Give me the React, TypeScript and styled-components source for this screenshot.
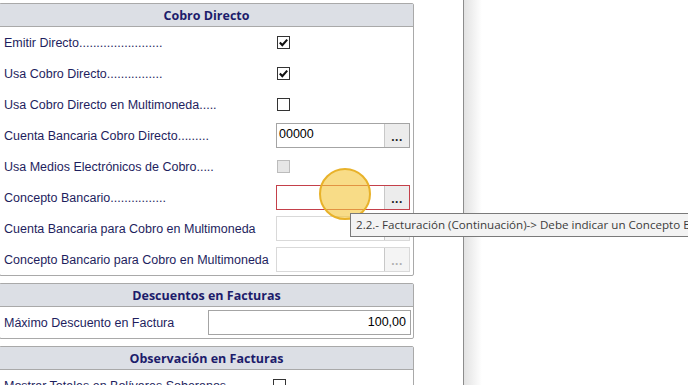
import styled, { createGlobalStyle } from "styled-components";

const GlobalStyle = createGlobalStyle`
  html, body {
    margin: 0;
    padding: 0;
    background: #ffffff;
    overflow: hidden;
  }
  body {
    font-family: "Liberation Sans", Arial, sans-serif;
  }
`;

const Screen = styled.div`
  position: relative;
  width: 688px;
  height: 385px;
  display: flex;
  overflow: hidden;
  background: #ffffff;
`;

const FormColumn = styled.div`
  width: 463px;
  flex-shrink: 0;
  padding-top: 3px;
  display: flex;
  flex-direction: column;
  gap: 7px;
`;

const Divider = styled.div`
  width: 18px;
  flex-shrink: 0;
  border-left: 1px solid #8c8c8c;
  background: linear-gradient(to right, #e2e2e2, #ffffff);
`;

const Panel = styled.section`
  width: 413px;
  margin-left: -1px;
  border: 1px solid #a9a9a9;
  border-radius: 2px;
  background: #ffffff;
  flex-shrink: 0;
`;

const PanelHeader = styled.div`
  height: 22px;
  display: flex;
  align-items: center;
  justify-content: center;
  background: #dcdfe5;
  border-bottom: 1px solid #a9a9a9;
  font-family: "Open Sans", "Liberation Sans", sans-serif;
  font-weight: 700;
  font-size: 12.5px;
  color: #1c1c6b;
`;

const Row = styled.div<{ $control?: number }>`
  height: 31px;
  display: grid;
  grid-template-columns: ${(p) => p.$control ?? 272}px 1fr;
  align-items: center;
  padding-left: 4px;
`;

const Label = styled.span`
  font-size: 12.5px;
  color: #1e1e5e;
  white-space: nowrap;
`;

const Check = styled.span<{ $disabled?: boolean }>`
  width: 13px;
  height: 13px;
  box-sizing: border-box;
  border: 1px solid ${(p) => (p.$disabled ? "#bcbcbc" : "#333333")};
  background: ${(p) => (p.$disabled ? "#e6e6e6" : "#ffffff")};
  display: flex;
  align-items: center;
  justify-content: center;
  margin-left: 1px;
`;

const Lookup = styled.div<{ $error?: boolean; $disabled?: boolean }>`
  width: 134px;
  height: 25px;
  box-sizing: border-box;
  display: flex;
  border: 1px solid
    ${(p) => (p.$error ? "#c4404a" : p.$disabled ? "#d9d9d9" : "#a4a4a4")};
`;

const LookupValue = styled.div`
  flex: 1;
  font-size: 12.5px;
  color: #000000;
  padding: 3px 0 0 2px;
  border-right: 1px solid #c8c8c8;
`;

const DotsButton = styled.div<{ $disabled?: boolean }>`
  width: 24px;
  background: ${(p) => (p.$disabled ? "#f4f4f4" : "#ececec")};
  color: ${(p) => (p.$disabled ? "#b0b0b0" : "#222222")};
  font-size: 12px;
  font-weight: 700;
  letter-spacing: 0.5px;
  display: flex;
  align-items: center;
  justify-content: center;
  padding-top: 2px;
`;

const NumberBox = styled.div`
  width: 203px;
  height: 25px;
  box-sizing: border-box;
  border: 1px solid #a4a4a4;
  font-size: 12.5px;
  color: #000000;
  text-align: right;
  padding: 4px 4px 0 0;
`;

const Highlight = styled.div`
  position: absolute;
  left: 319px;
  top: 168px;
  width: 52px;
  height: 52px;
  box-sizing: border-box;
  border-radius: 50%;
  background: rgba(244, 198, 62, 0.62);
  border: 2px solid #e8b22a;
`;

const Tooltip = styled.div`
  position: absolute;
  left: 350px;
  top: 213px;
  height: 24px;
  box-sizing: border-box;
  padding: 3px 5px 0 5px;
  background: #f3f3f3;
  border: 1px solid #7a7a7a;
  font-family: "Open Sans", "Liberation Sans", sans-serif;
  font-size: 11.6px;
  color: #3c3c3c;
  white-space: nowrap;
`;

const Tick = () => (
  <svg width="11" height="11" viewBox="0 0 11 11">
    <path d="M1.8 5.6 L4.3 8.1 L9.2 2.6" fill="none" stroke="#111" strokeWidth="2.1" />
  </svg>
);

function App() {
  return (
    <Screen>
      <GlobalStyle />
      <FormColumn>
        <Panel>
          <PanelHeader>Cobro Directo</PanelHeader>
          <Row>
            <Label>Emitir Directo........................</Label>
            <Check><Tick /></Check>
          </Row>
          <Row>
            <Label>Usa Cobro Directo................</Label>
            <Check><Tick /></Check>
          </Row>
          <Row>
            <Label>Usa Cobro Directo en Multimoneda.....</Label>
            <Check />
          </Row>
          <Row>
            <Label>Cuenta Bancaria Cobro Directo.........</Label>
            <Lookup>
              <LookupValue>00000</LookupValue>
              <DotsButton>...</DotsButton>
            </Lookup>
          </Row>
          <Row>
            <Label>Usa Medios Electrónicos de Cobro.....</Label>
            <Check $disabled />
          </Row>
          <Row>
            <Label>Concepto Bancario................</Label>
            <Lookup $error>
              <LookupValue />
              <DotsButton>...</DotsButton>
            </Lookup>
          </Row>
          <Row>
            <Label>Cuenta Bancaria para Cobro en Multimoneda</Label>
            <Lookup $disabled>
              <LookupValue />
              <DotsButton $disabled>...</DotsButton>
            </Lookup>
          </Row>
          <Row>
            <Label>Concepto Bancario para Cobro en Multimoneda</Label>
            <Lookup $disabled>
              <LookupValue />
              <DotsButton $disabled>...</DotsButton>
            </Lookup>
          </Row>
        </Panel>

        <Panel>
          <PanelHeader>Descuentos en Facturas</PanelHeader>
          <Row $control={204}>
            <Label>Máximo Descuento en Factura</Label>
            <NumberBox>100,00</NumberBox>
          </Row>
        </Panel>

        <Panel>
          <PanelHeader>Observación en Facturas</PanelHeader>
          <Row $control={268}>
            <Label>Mostrar Totales en Bolívares Soberanos</Label>
            <Check />
          </Row>
        </Panel>
      </FormColumn>
      <Divider />

      <Highlight />
      <Tooltip>2.2.- Facturación (Continuación)-&gt; Debe indicar un Concepto Bancario</Tooltip>
    </Screen>
  );
}

export default App;
